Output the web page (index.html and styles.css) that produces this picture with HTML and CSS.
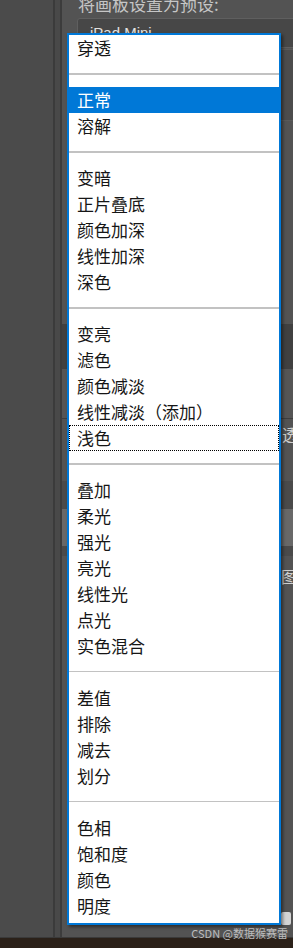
FILE: index.html
```html
<!DOCTYPE html>
<html lang="zh-CN">
<head>
    <meta charset="UTF-8">
    <meta name="viewport" content="width=device-width, initial-scale=1.0">
    <title>混合模式</title>
    <link rel="stylesheet" href="styles.css">
</head>
<body>
    <div class="screen">
        <div class="side"></div>
        <div class="panel">
            <p class="caption">将画板设置为预设:</p>
            <div class="preset">iPad Mini</div>
            <div class="field"></div>
            <div class="band band-dark"></div>
            <div class="band band-mid"></div>
            <div class="row-text">透明区域</div>
            <div class="band band-gap"></div>
            <div class="band band-low"></div>
            <div class="band band-light"></div>
            <div class="band band-low2"></div>
            <div class="row-text row-text2">图层</div>
            <div class="filler"><span class="mini-btn"></span></div>

            <!-- 混合模式下拉菜单 -->
            <ul class="blend-menu">
                <li class="item">穿透</li>
                <li class="sep"></li>
                <li class="item active">正常</li>
                <li class="item">溶解</li>
                <li class="sep"></li>
                <li class="item">变暗</li>
                <li class="item">正片叠底</li>
                <li class="item">颜色加深</li>
                <li class="item">线性加深</li>
                <li class="item">深色</li>
                <li class="sep"></li>
                <li class="item">变亮</li>
                <li class="item">滤色</li>
                <li class="item">颜色减淡</li>
                <li class="item">线性减淡（添加）</li>
                <li class="item focus">浅色</li>
                <li class="sep"></li>
                <li class="item">叠加</li>
                <li class="item">柔光</li>
                <li class="item">强光</li>
                <li class="item">亮光</li>
                <li class="item">线性光</li>
                <li class="item">点光</li>
                <li class="item">实色混合</li>
                <li class="sep thin"></li>
                <li class="item">差值</li>
                <li class="item">排除</li>
                <li class="item">减去</li>
                <li class="item">划分</li>
                <li class="sep thin"></li>
                <li class="item">色相</li>
                <li class="item">饱和度</li>
                <li class="item">颜色</li>
                <li class="item">明度</li>
            </ul>
        </div>
    </div>
    <div class="floor"></div>
    <span class="watermark">CSDN @数据猴赛雷</span>
</body>
</html>
```

FILE: styles.css
```css
body {
    margin: 0;
    padding: 0;
    width: 293px;
    height: 948px;
    overflow: hidden;
    background-color: #535353;
    font-family: "Noto Sans CJK SC", "Noto Sans", sans-serif;
    position: relative;
}
.screen {
    display: flex;
    height: 937px;
    border-bottom: 1px solid #3a3a3a;
}
.side {
    flex: none;
    width: 53px;
    background-color: #4b4b4b;
    border-right: 2px solid #3b3b3b;
    box-shadow: 5px 0 0 #494949, 7px 0 0 #3c3c3c;
    margin-right: 7px;
}
.panel {
    flex: 1;
    min-width: 0;
    position: relative;
    display: flex;
    flex-direction: column;
}
.caption {
    margin: -6px 0 0 16px;
    font-size: 17px;
    line-height: 20px;
    color: #c6c6c6;
    white-space: nowrap;
}
.preset {
    margin: 4px -10px 0 15px;
    height: 28px;
    border: 1px solid #5f5f5f;
    border-radius: 3px;
    background-color: #474747;
    color: #e2e2e2;
    font-family: "Liberation Sans", sans-serif;
    font-size: 15px;
    line-height: 28px;
    padding-left: 12px;
}
.field {
    margin: 1px -10px 0 15px;
    height: 70px;
    border: 1px solid #5a5a5a;
    border-radius: 3px;
    background-color: #4c4c4c;
}
.band {
    flex: none;
}
.band-dark {
    margin-top: 203px;
    height: 45px;
    background-color: #404040;
}
.band-mid {
    height: 49px;
    background-color: #555555;
    border-bottom: 1px solid #3e3e3e;
}
.row-text {
    height: 30px;
    line-height: 30px;
    padding-left: 220px;
    color: #cfcfcf;
    font-size: 16px;
    white-space: nowrap;
    overflow: hidden;
}
.band-gap {
    height: 32px;
}
.band-low {
    height: 28px;
    background-color: #4a4a4a;
}
.band-light {
    height: 37px;
    background-color: #686868;
}
.band-low2 {
    height: 10px;
    background-color: #4a4a4a;
}
.row-text2 {
    height: 40px;
    line-height: 40px;
    padding-left: 219px;
}
.filler {
    flex: 1;
    display: flex;
    align-items: flex-end;
    justify-content: flex-end;
    padding-bottom: 12px;
}
.mini-btn {
    width: 10px;
    height: 13px;
    margin-right: 2px;
    background-color: #d4d4d4;
    border-radius: 2px;
}
/* 下拉菜单盖在面板上面 */
.blend-menu {
    position: absolute;
    left: 5px;
    top: 33px;
    width: 210px;
    margin: 0;
    padding: 0 0 4px 0;
    list-style: none;
    background-color: #ffffff;
    border: 2px solid #0078d7;
    box-shadow: 2px 2px 3px rgba(0, 0, 0, 0.45);
}
.item {
    height: 26px;
    line-height: 26px;
    padding-left: 8px;
    font-size: 17px;
    color: #161616;
    box-sizing: border-box;
    white-space: nowrap;
}
.item.active {
    background-color: #0078d7;
    color: #ffffff;
}
.item.focus {
    outline: 1px dotted #000000;
    outline-offset: -1px;
}
.sep {
    height: 26px;
    position: relative;
}
.sep::after {
    content: "";
    display: block;
    position: absolute;
    left: 0;
    right: 0;
    top: 12px;
    height: 2px;
    background-color: #c2c2c2;
}
.sep.thin::after {
    top: 12px;
    height: 1px;
}
.floor {
    height: 10px;
    background-color: #2b2119;
}
.watermark {
    position: absolute;
    right: 5px;
    bottom: 7px;
    font-size: 11px;
    color: #bdbdbd;
    white-space: nowrap;
}
```
